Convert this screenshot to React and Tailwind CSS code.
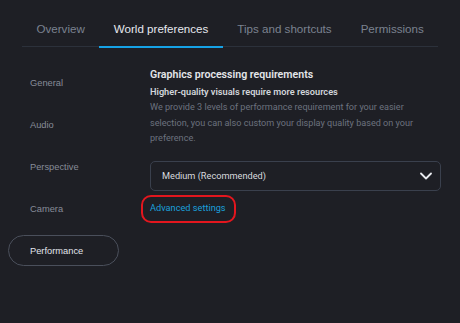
import React from "react";

const tabs = ["Overview", "World preferences", "Tips and shortcuts", "Permissions"];
const side = ["General", "Audio", "Perspective", "Camera", "Performance"];

export default function App() {
  return (
    <div className="w-[460px] h-[323px] bg-[#1e1f25] overflow-hidden" style={{ fontFamily: "'Liberation Sans', Arial, sans-serif" }}>
      <div className="px-[22px]">
        <div className="flex border-b border-[#2c313b]">
          {tabs.map((t, i) => (
            <div key={t} className={`relative h-[46px] flex items-end pb-[9px] px-[14.5px] text-[11.6px] leading-[16px] whitespace-nowrap ${i === 1 ? "text-[#e6e8ee]" : "text-[#7b8290]"}`}>
              {t}
              {i === 1 && <span className="absolute left-0 right-0 top-full h-[2px] bg-[#16a2e6]" />}
            </div>
          ))}
        </div>
      </div>
      <div className="flex pl-[8px]">
        <div className="w-[111px] pt-[20px] flex flex-col gap-[11px]">
          {side.map((s, i) => (
            <div key={s} className={`h-[31px] flex items-center pl-[21px] pt-[2px] text-[9.3px] rounded-full border ${i === 4 ? "border-[#4a4f5b] text-[#e2e5ec]" : "border-transparent text-[#878c98]"}`}>
              {s}
            </div>
          ))}
        </div>
        <div className="ml-[31px] w-[291px] pt-[19px]" style={{ fontFamily: "Roboto, 'Liberation Sans', sans-serif" }}>
          <div className="text-[10.6px] leading-[17px] font-semibold text-[#e4e6ea] whitespace-nowrap">Graphics processing requirements</div>
          <div className="text-[9.2px] leading-[17px] font-semibold text-[#d2d5da] whitespace-nowrap">Higher-quality visuals require more resources</div>
          <div className="text-[9.1px] leading-[15.6px] text-[#6c727f] whitespace-nowrap">
            We provide 3 levels of performance requirement for your easier
            <br />
            selection, you can also custom your display quality based on your
            <br />
            preference.
          </div>
          <div className="mt-[14px] h-[30px] rounded-[5px] border border-[#3a404d] flex items-center justify-between pl-[11px] pr-[8px]">
            <span className="text-[9.2px] text-[#d8dadf]">Medium (Recommended)</span>
            <svg width="12" height="8" viewBox="0 0 12 8" fill="none">
              <path d="M1 1.5 L6 6.5 L11 1.5" stroke="#e8eaee" strokeWidth="1.8" strokeLinecap="round" strokeLinejoin="round" />
            </svg>
          </div>
          <div className="relative w-fit mt-[9px] h-[16px] leading-[16px] text-[9.2px] text-[#1a9fdc]">
            Advanced settings
            <span className="absolute -left-[9px] -top-[5px] w-[95px] h-[28px] border-2 border-[#e3161e] rounded-[10px]" />
          </div>
        </div>
      </div>
    </div>
  );
}
